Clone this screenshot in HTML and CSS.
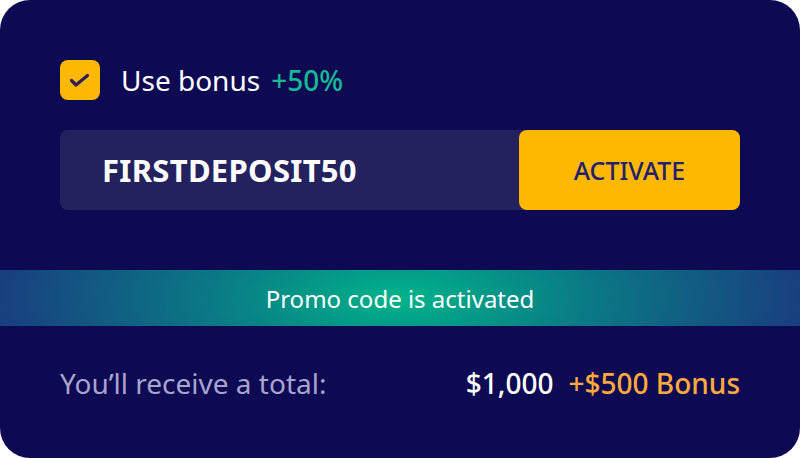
FILE: index.html
```html
<!DOCTYPE html>
<html lang="en">
<head>
  <meta charset="UTF-8">
  <title>Promo Code</title>
  <link rel="stylesheet" href="styles.css">
</head>
<body>
  <div class="promo-card">

    <!-- Bonus checkbox -->
    <div class="bonus-row">
      <span class="check-box">
        <svg width="40" height="40" viewBox="0 0 40 40">
          <path d="M11.5 20.5 L16 25 L27.5 15.5" fill="none" stroke="#2b1d5c" stroke-width="3.2" stroke-linecap="round" stroke-linejoin="round"/>
        </svg>
      </span>
      <span class="bonus-label">Use bonus</span>
      <span class="bonus-value">+50%</span>
    </div>

    <!-- Code input -->
    <div class="code-row">
      <div class="code-field">FIRSTDEPOSIT50</div>
      <button class="activate-btn">ACTIVATE</button>
    </div>

    <div class="status-bar">Promo code is activated</div>

    <!-- Totals -->
    <div class="total-row">
      <span class="total-label">You’ll receive a total:</span>
      <span class="total-amount">$1,000</span>
      <span class="total-bonus">+$500 Bonus</span>
    </div>

  </div>
</body>
</html>
```

FILE: styles.css
```css
body {
  margin: 0;
  background: #ffffff;
  font-family: "Noto Sans", "Open Sans", sans-serif;
}
.promo-card {
  width: 800px;
  height: 458px;
  background: #0d0952;
  border-radius: 30px;
  overflow: hidden;
  padding-top: 60px;
  box-sizing: border-box;
}
.bonus-row {
  display: flex;
  align-items: center;
  height: 40px;
  padding: 0 60px;
}
.check-box {
  width: 40px;
  height: 40px;
  border-radius: 8px;
  background: #ffb800;
  margin-right: 21px;
}
.bonus-label {
  color: #ffffff;
  font-size: 28px;
  margin-right: 11px;
}
.bonus-value {
  color: #16b895;
  font-size: 28px;
  font-weight: 500;
}
.code-row {
  display: flex;
  margin: 30px 60px 0;
  height: 80px;
  background: #24215f;
  border-radius: 8px;
}
.code-field {
  flex: 1;
  display: flex;
  align-items: center;
  padding-left: 42px;
  color: #ffffff;
  font-size: 31px;
  font-weight: 700;
  letter-spacing: 0.3px;
}
.activate-btn {
  width: 221px;
  border: none;
  border-radius: 8px;
  background: #ffb800;
  color: #241f6e;
  font-family: inherit;
  font-size: 25px;
  font-weight: 500;
  cursor: pointer;
}
.status-bar {
  margin-top: 60px;
  height: 56px;
  display: flex;
  align-items: center;
  justify-content: center;
  color: #ffffff;
  font-size: 24px;
  background: radial-gradient(ellipse 420px 160px at 50% 50%, #00b48a 0%, #0a7a85 45%, #1a3a7e 100%);
}
.total-row {
  display: flex;
  align-items: center;
  padding: 0 60px;
  margin-top: 38px;
  font-size: 28px;
}
.total-label {
  flex: 1;
  color: #a8a4cf;
}
.total-amount {
  color: #ffffff;
  font-weight: 500;
  margin-right: 15px;
}
.total-bonus {
  color: #ffaa3b;
  font-weight: 500;
}
```
